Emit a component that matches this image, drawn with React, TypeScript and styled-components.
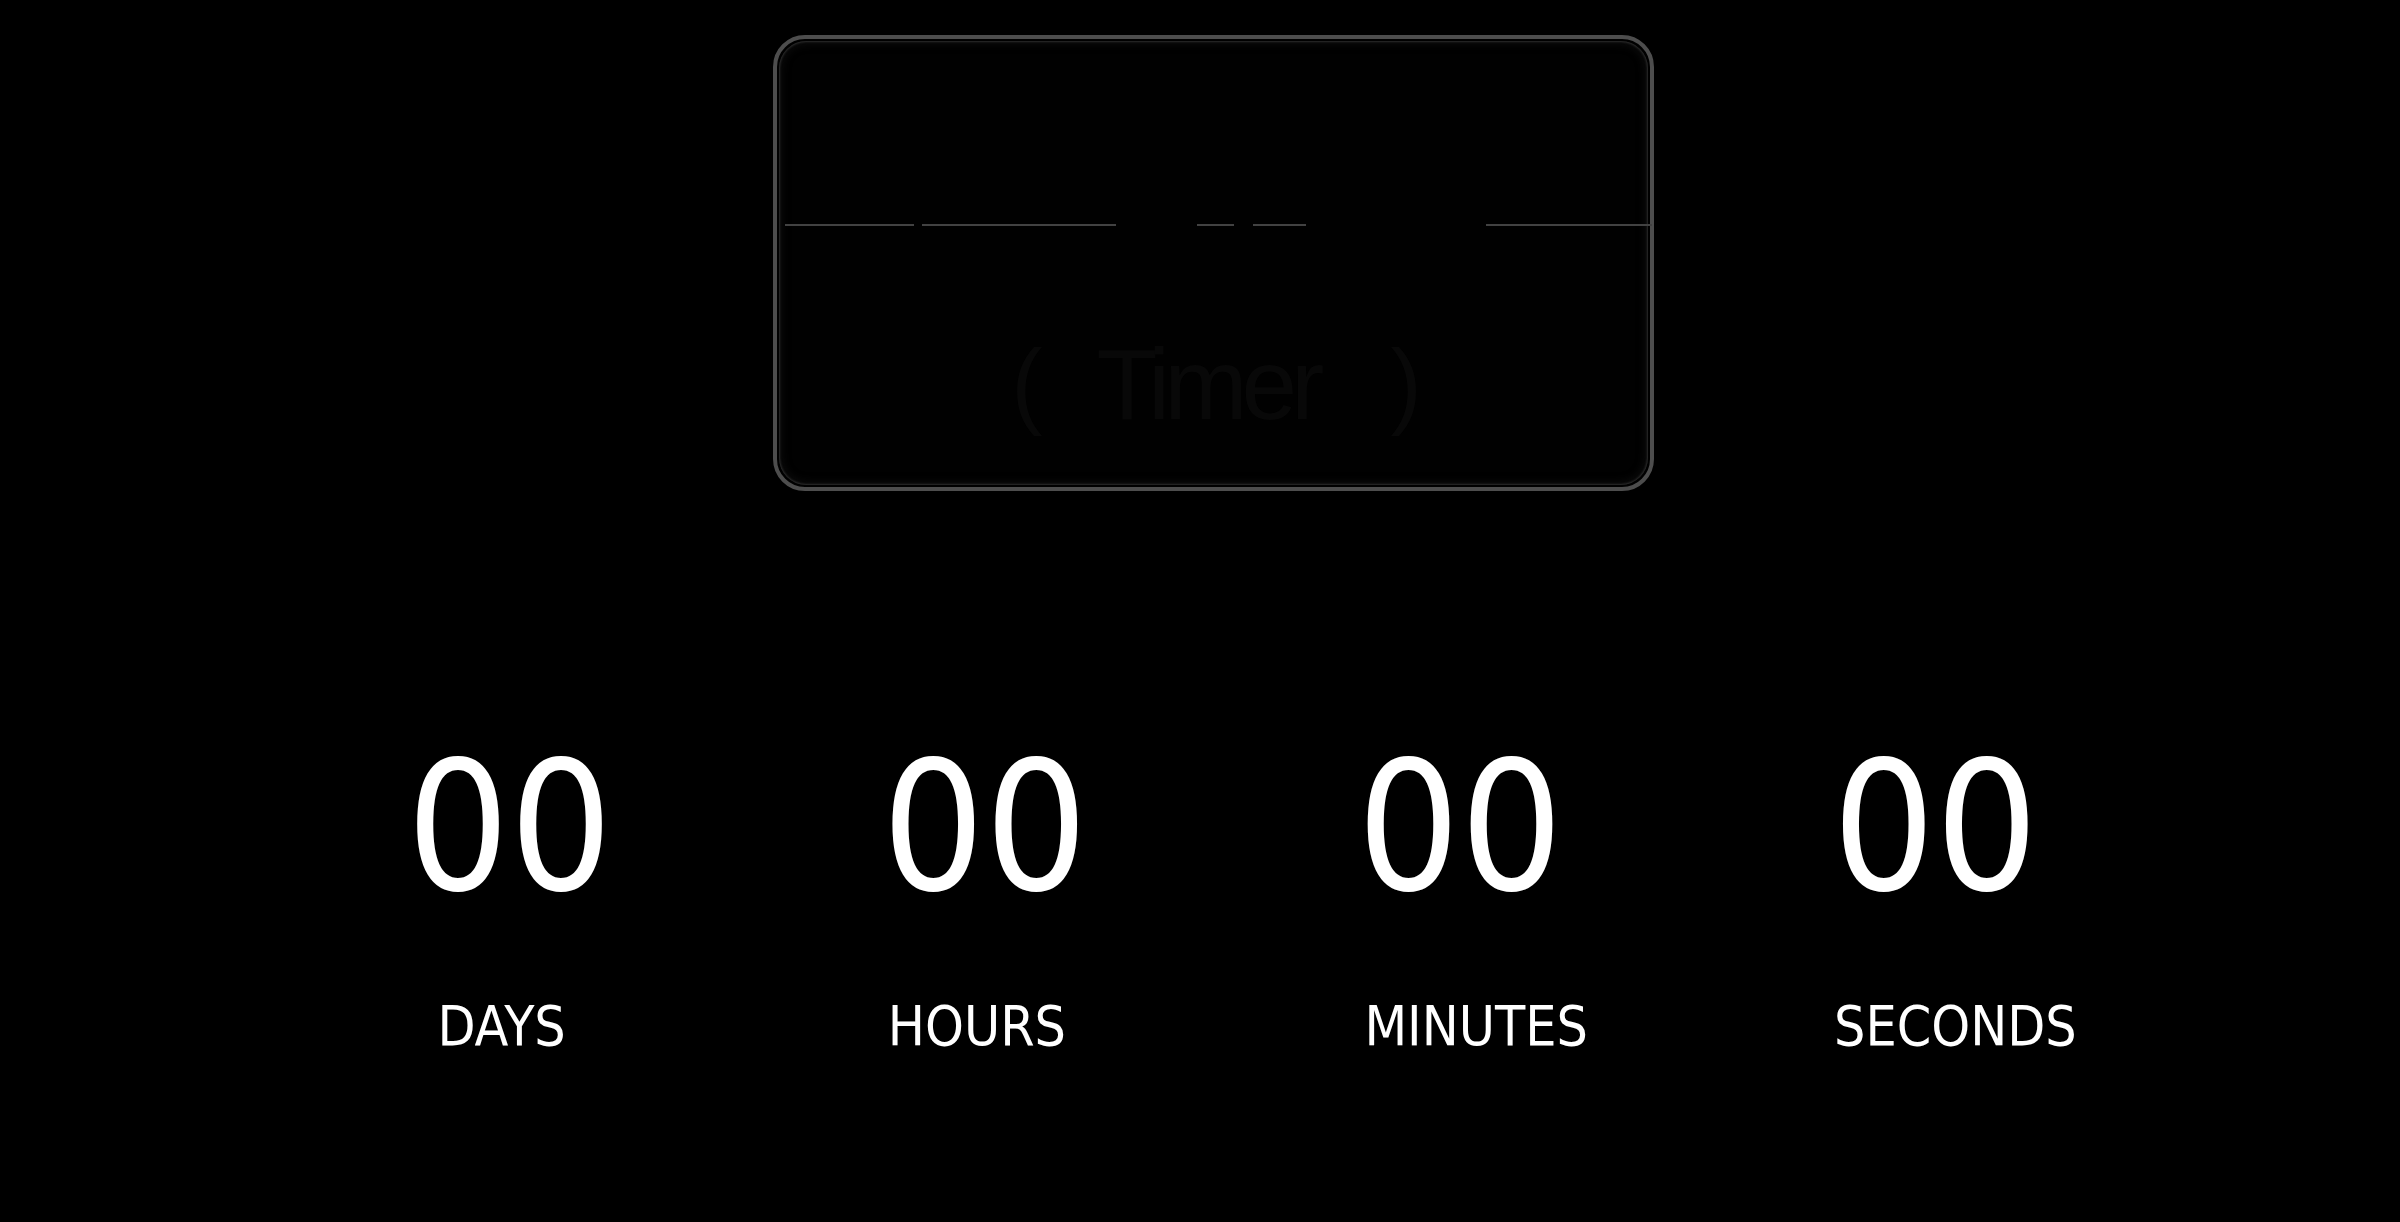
import styled, { createGlobalStyle } from 'styled-components';

const GlobalStyle = createGlobalStyle`
    html, body {
        margin: 0;
        padding: 0;
        background: #000;
    }
    body {
        min-height: 1222px;
        font-family: "DejaVu Sans", "Liberation Sans", sans-serif;
        color: #fff;
    }
`;

const Page = styled.main`
    display: flex;
    flex-direction: column;
    align-items: flex-start;
    padding-top: 35px;
`;

const Preview = styled.div`
    margin-left: 773px;
    width: 881px;
    height: 456px;
    box-sizing: border-box;
    border: 4px solid #4d4d4d;
    border-radius: 32px;
    padding: 2px;
    background: #000;
`;

const Frame = styled.div`
    height: 100%;
    border-radius: 27px;
    background: #010101;
    box-shadow: inset 0 0 2px 1px rgba(80, 80, 80, 0.5), inset 0 0 12px rgba(60, 60, 60, 0.35);
    display: flex;
    flex-direction: column;
    align-items: center;
    padding-top: 183px;
    box-sizing: border-box;
`;

const ScanLine = styled.div`
    width: 100%;
    height: 2px;
    display: flex;
    filter: blur(0.4px);
`;

const Segment = styled.span<{ $w: number; $gap?: boolean }>`
    flex: 0 0 ${p => p.$w}px;
    background: ${p => (p.$gap ? 'transparent' : '#424242')};
`;

const FaintTitle = styled.div`
    margin-top: 108px;
    margin-left: 6px;
    display: flex;
    align-items: center;
    font-family: "Liberation Sans", sans-serif;
    font-size: 100px;
    line-height: 1;
    color: #080808;
`;

const Word = styled.span`
    letter-spacing: -6px;
    margin: 0 72px 0 54px;
`;

const Paren = styled.span`
    font-size: 94px;
`;

const Counter = styled.section`
    margin-left: 272px;
    margin-top: 246px;
    width: 1901px;
    display: grid;
    grid-template-columns: repeat(4, 1fr);
`;

const Unit = styled.div`
    display: flex;
    flex-direction: column;
    align-items: center;
    gap: 82px;
`;

const Value = styled.div`
    font-family: "DejaVu Sans", sans-serif;
    font-stretch: condensed;
    font-size: 180px;
    line-height: 1;
    color: #fff;
`;

const Label = styled.div<{ $nudge: number }>`
    font-family: "DejaVu Sans", sans-serif;
    font-stretch: condensed;
    font-size: 55px;
    line-height: 1;
    color: #fff;
    margin-left: ${p => p.$nudge * 2}px;
`;

const segments: [number, boolean][] = [
    [6, true], [129, false], [8, true], [194, false], [81, true], [37, false],
    [19, true], [53, false], [180, true], [166, false],
];

const units: [string, number][] = [['DAYS', -8], ['HOURS', -8], ['MINUTES', 16], ['SECONDS', 20]];

export default function App() {
    return (
        <>
            <GlobalStyle />
            <Page>
                <Preview>
                    <Frame>
                        <ScanLine>
                            {segments.map(([w, gap], i) => <Segment key={i} $w={w} $gap={gap} />)}
                        </ScanLine>
                        <FaintTitle>
                            <Paren>(</Paren>
                            <Word>Timer</Word>
                            <Paren>)</Paren>
                        </FaintTitle>
                    </Frame>
                </Preview>
                <Counter>
                    {units.map(([u, nudge]) => (
                        <Unit key={u}>
                            <Value>00</Value>
                            <Label $nudge={nudge}>{u}</Label>
                        </Unit>
                    ))}
                </Counter>
            </Page>
        </>
    );
}
